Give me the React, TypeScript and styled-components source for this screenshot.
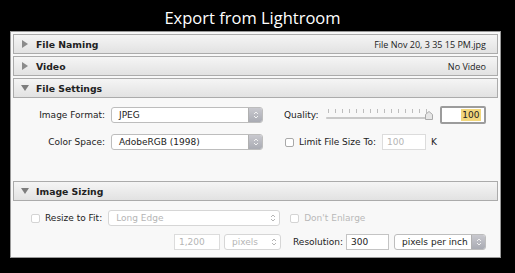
import React from "react";
import styled, { createGlobalStyle } from "styled-components";

const GlobalStyle = createGlobalStyle`
  html, body {
    margin: 0;
    padding: 0;
    background: #000;
  }
`;

const UI_FONT = `"DejaVu Sans", "Liberation Sans", sans-serif`;

const Page = styled.div`
  width: 515px;
  height: 273px;
  background: #000;
  display: flex;
  flex-direction: column;
  overflow: hidden;
`;

const Title = styled.div`
  height: 31px;
  box-sizing: border-box;
  padding: 3px 10px 0 0;
  display: flex;
  align-items: center;
  justify-content: center;
  color: #fff;
  font-family: "Open Sans", sans-serif;
  font-size: 16.5px;
`;

const Panel = styled.div`
  margin: 0 14px 0 10px;
  height: 227px;
  box-sizing: border-box;
  background: #f8f8f8;
  border: 1px solid #9a9a9a;
  padding: 0 2px;
  display: flex;
  flex-direction: column;
  font-family: ${UI_FONT};
  font-size: 9px;
  color: #222;
`;

const SectionHeader = styled.div`
  height: 20px;
  box-sizing: border-box;
  margin-top: 2px;
  display: flex;
  align-items: center;
  padding: 0 11px 0 7px;
  background: linear-gradient(#f5f5f5, #e2e2e2);
  border: 1px solid #ababab;
`;

const HeaderTitle = styled.span`
  font-weight: bold;
  font-size: 9.3px;
  margin-left: 7px;
  flex: 1;
`;

const HeaderValue = styled.span`
  font-family: "Open Sans", sans-serif;
  font-size: 9px;
  color: #222;
`;

const Content = styled.div<{ $h: number }>`
  height: ${(p) => p.$h}px;
  display: flex;
  flex-direction: column;
`;

const Row = styled.div<{ $top: number; $indent?: number }>`
  display: flex;
  align-items: center;
  height: 16px;
  margin-top: ${(p) => p.$top}px;
  padding-left: ${(p) => p.$indent ?? 0}px;
`;

const Label = styled.span<{ $w?: number; $off?: boolean }>`
  width: ${(p) => (p.$w ? `${p.$w}px` : "auto")};
  text-align: right;
  color: ${(p) => (p.$off ? "#b9b9b9" : "#222")};
  white-space: nowrap;
`;

const SelectBox = styled.div<{ $w: number; $ml: number; $off?: boolean }>`
  width: ${(p) => p.$w}px;
  margin-left: ${(p) => p.$ml}px;
  height: 16px;
  box-sizing: border-box;
  border: 1px solid ${(p) => (p.$off ? "#d6d6d6" : "#bdbdbd")};
  border-radius: 3px;
  background: #fff;
  display: flex;
  align-items: center;
  padding-left: 7px;
  color: ${(p) => (p.$off ? "#b5b5b5" : "#222")};
  overflow: hidden;
`;

const SelectText = styled.span`
  flex: 1;
  white-space: nowrap;
`;

const Stepper = styled.div<{ $off?: boolean }>`
  width: 13px;
  align-self: stretch;
  display: flex;
  align-items: center;
  justify-content: center;
  background: ${(p) => (p.$off ? "transparent" : "linear-gradient(#c9c9cf, #a9abb3)")};
  border-left: ${(p) => (p.$off ? "none" : "1px solid #b0b0b0")};
`;

const TextField = styled.div<{ $w: number; $ml: number; $off?: boolean }>`
  width: ${(p) => p.$w}px;
  margin-left: ${(p) => p.$ml}px;
  height: 16px;
  box-sizing: border-box;
  border: 1px solid ${(p) => (p.$off ? "#dcdcdc" : "#c4c4c4")};
  background: #fff;
  display: flex;
  align-items: center;
  padding-left: 4px;
  color: ${(p) => (p.$off ? "#b5b5b5" : "#222")};
`;

const FocusField = styled.div`
  width: 46px;
  height: 18px;
  margin-left: 7px;
  box-sizing: border-box;
  border: 2px solid #9c9c9c;
  border-radius: 2px;
  background: #fff;
  display: flex;
  align-items: center;
  justify-content: flex-end;
  padding-right: 3px;
`;

const Highlight = styled.span`
  background: #f2d77c;
  padding: 0 1px;
  line-height: 12px;
`;

const Check = styled.span<{ $ml: number; $off?: boolean }>`
  width: 9px;
  height: 9px;
  margin-left: ${(p) => p.$ml}px;
  margin-right: 5px;
  box-sizing: border-box;
  border: 1px solid ${(p) => (p.$off ? "#d4d4d4" : "#a9a9a9")};
  border-radius: 2px;
  background: #fff;
`;

const Slider = styled.div`
  position: relative;
  width: 107px;
  height: 16px;
  margin-left: 7px;
`;

const Track = styled.div`
  position: absolute;
  left: 0;
  right: 3px;
  top: 10px;
  height: 2px;
  background: #c9c9c9;
  border-radius: 1px;
`;

const Ticks = styled.div`
  position: absolute;
  left: 2px;
  right: 5px;
  top: 2px;
  height: 4px;
  display: flex;
  justify-content: space-between;
`;

const Tick = styled.span`
  width: 1px;
  height: 4px;
  background: #bdbdbd;
`;

const Thumb = styled.svg`
  position: absolute;
  right: 0;
  top: 4px;
`;

const Unit = styled.span`
  margin-left: 5px;
`;

const Triangle = ({ open }: { open?: boolean }) => (
  <svg width="8" height="8" viewBox="0 0 8 8">
    {open ? (
      <path d="M0 1 L8 1 L4 7 Z" fill="#7d7d7d" />
    ) : (
      <path d="M1 0 L7 4 L1 8 Z" fill="#8a8a8a" />
    )}
  </svg>
);

const Chevrons = ({ color }: { color: string }) => (
  <svg width="6" height="10" viewBox="0 0 6 10">
    <path d="M1 4 L3 2 L5 4" fill="none" stroke={color} strokeWidth="1" />
    <path d="M1 6 L3 8 L5 6" fill="none" stroke={color} strokeWidth="1" />
  </svg>
);

const Select = ({
  value,
  w,
  ml,
  off,
}: {
  value: string;
  w: number;
  ml: number;
  off?: boolean;
}) => (
  <SelectBox $w={w} $ml={ml} $off={off}>
    <SelectText>{value}</SelectText>
    <Stepper $off={off}>
      <Chevrons color={off ? "#b5b5b5" : "#f2f2f2"} />
    </Stepper>
  </SelectBox>
);

export default function App() {
  return (
    <Page>
      <GlobalStyle />
      <Title>Export from Lightroom</Title>
      <Panel>
        <SectionHeader>
          <Triangle />
          <HeaderTitle>File Naming</HeaderTitle>
          <HeaderValue>File Nov 20, 3 35 15 PM.jpg</HeaderValue>
        </SectionHeader>
        <SectionHeader>
          <Triangle />
          <HeaderTitle>Video</HeaderTitle>
          <HeaderValue>No Video</HeaderValue>
        </SectionHeader>
        <SectionHeader>
          <Triangle open />
          <HeaderTitle>File Settings</HeaderTitle>
        </SectionHeader>
        <Content $h={81}>
          <Row $top={9}>
            <Label $w={92}>Image Format:</Label>
            <Select value="JPEG" w={152} ml={6} />
            <Label style={{ marginLeft: 21 }}>Quality:</Label>
            <Slider>
              <Ticks>
                {Array.from({ length: 15 }).map((_, i) => (
                  <Tick key={i} />
                ))}
              </Ticks>
              <Track />
              <Thumb width="8" height="9" viewBox="0 0 8 9">
                <path
                  d="M4 0.5 L7.5 3.5 L7.5 8.5 L0.5 8.5 L0.5 3.5 Z"
                  fill="#e6e6e6"
                  stroke="#aaa"
                />
              </Thumb>
            </Slider>
            <FocusField>
              <Highlight>100</Highlight>
            </FocusField>
          </Row>
          <Row $top={11}>
            <Label $w={92}>Color Space:</Label>
            <Select value="AdobeRGB (1998)" w={152} ml={6} />
            <Check $ml={22} />
            <Label>Limit File Size To:</Label>
            <TextField $w={44} $ml={6} $off>
              100
            </TextField>
            <Unit>K</Unit>
          </Row>
        </Content>
        <SectionHeader>
          <Triangle open />
          <HeaderTitle>Image Sizing</HeaderTitle>
        </SectionHeader>
        <Content $h={56}>
          <Row $top={9}>
            <Check $ml={18} $off />
            <Label>Resize to Fit:</Label>
            <Select value="Long Edge" w={172} ml={6} off />
            <Check $ml={10} $off />
            <Label $off>Don't Enlarge</Label>
          </Row>
          <Row $top={8} $indent={161}>
            <TextField $w={46} $ml={0} $off>
              1,200
            </TextField>
            <Select value="pixels" w={57} ml={4} off />
            <Label style={{ marginLeft: 12 }}>Resolution:</Label>
            <TextField $w={43} $ml={3}>
              300
            </TextField>
            <Select value="pixels per inch" w={92} ml={5} />
          </Row>
        </Content>
      </Panel>
    </Page>
  );
}
